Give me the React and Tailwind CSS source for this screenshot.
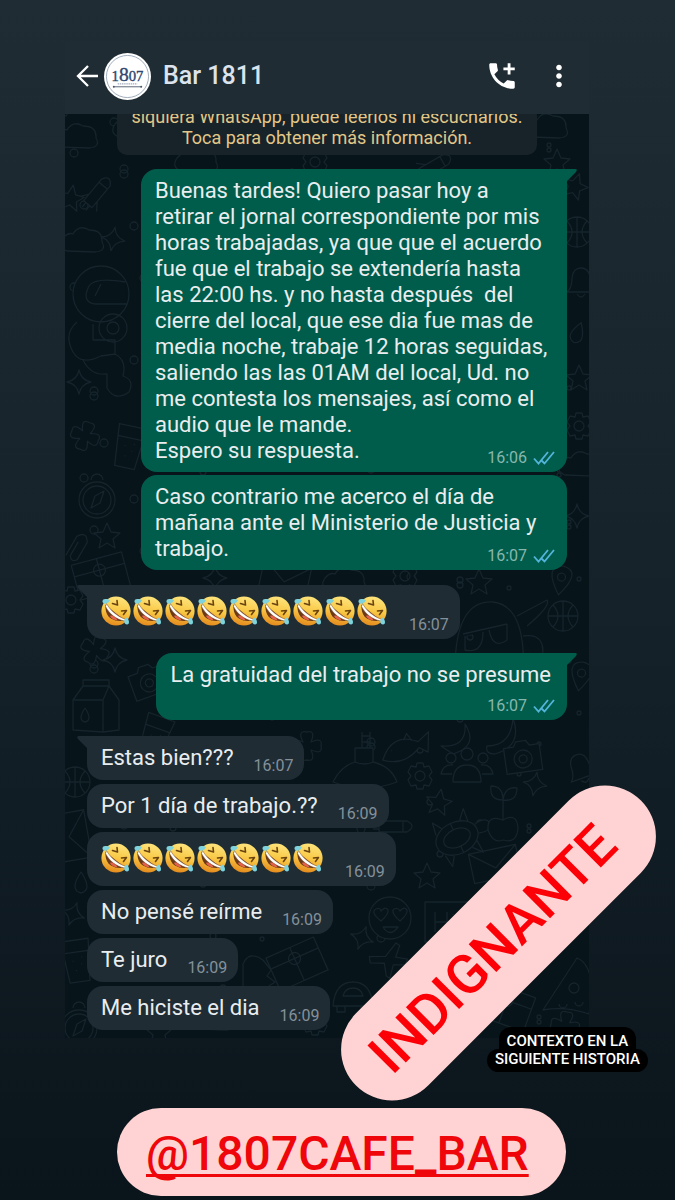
import React from 'react';
import { MdAddIcCall, MdMoreVert } from 'react-icons/md';

const longText = `Buenas tardes! Quiero pasar hoy a
retirar el jornal correspondiente por mis
horas trabajadas, ya que que el acuerdo
fue que el trabajo se extendería hasta
las 22:00 hs. y no hasta después  del
cierre del local, que ese dia fue mas de
media noche, trabaje 12 horas seguidas,
saliendo las las 01AM del local, Ud. no
me contesta los mensajes, así como el
audio que le mande.
Espero su respuesta.`;

const warningText = `Caso contrario me acerco el día de
mañana ante el Ministerio de Justicia y
trabajo.`;

// [type, x, y, rotation]
const doodles = [
  ['rocket', 34, 76, 40], ['star', 6, 84, 10], ['cloud', 18, 128, 0], ['spark', 48, 125, 10],
  ['helmet', 36, 180, 0], ['spark', 14, 268, 0], ['flower', 20, 322, 20], ['cup', 64, 332, 12],
  ['compass', 32, 384, 0], ['star', 42, 422, 0], ['clip', 12, 434, 30], ['box', 36, 462, -15],
  ['gear', 6, 486, 0], ['flower', 30, 536, 30], ['spark', 50, 546, 0], ['carton', 30, 594, 0],
  ['star', 72, 486, 10], ['camera', 84, 568, -20], ['ball', 10, 668, 0], ['card', 8, 722, 80],
  ['drop', 16, 770, 0], ['spark', 8, 800, 20], ['cup', 12, 846, -8], ['compass', 14, 912, 0],
  ['cloud', 12, 24, 0], ['cloud', 70, 14, 0], ['star', 510, 72, 20], ['cloud', 482, 14, 0],
  ['star', 492, 48, 0], ['cloud', 132, 48, 0], ['gear', 250, 48, 0], ['rocket', 372, 50, 60],
  ['ball', 512, 118, 0], ['bell', 516, 168, 0], ['drop', 512, 220, 20], ['star', 514, 264, 0],
  ['gear', 514, 312, 0], ['cloud', 516, 352, 0], ['spark', 512, 402, 0], ['star', 414, 468, 0],
  ['pin', 496, 466, 10], ['ghost', 428, 522, 0], ['ball', 498, 502, 0], ['gear', 340, 462, 0],
  ['cloud', 280, 468, 0], ['card', 220, 464, 12], ['spark', 150, 464, 0], ['pin', 516, 562, 10],
  ['fish', 340, 634, -10], ['cup', 90, 622, 20], ['flower', 242, 632, 0], ['banana', 436, 618, 0],
  ['gear', 355, 662, 0], ['people', 402, 656, 0], ['camera', 458, 644, -8], ['spark', 470, 670, 10],
  ['star', 374, 688, 10], ['turtle', 392, 724, -25], ['cherry', 438, 706, 0], ['bell', 516, 654, -20],
  ['hat', 300, 660, 0], ['rocket', 332, 712, 90], ['star', 362, 762, 0], ['card', 430, 750, -12],
  ['love', 325, 804, 0], ['sign', 390, 808, 0], ['box', 232, 850, -24],
  ['spark', 297, 824, 20], ['plane', 324, 846, 10], ['dino', 192, 862, 0], ['car', 288, 884, 0],
  ['cloud', 150, 906, 0], ['gear', 250, 908, 0], ['pizza', 508, 870, 0],
  ['flower', 500, 912, 10], ['box', 440, 892, 20], ['star', 94, 918, 0],
];

const shapes = {
  star: 'M0 -13L4 -4L13 -3L6 3L8 12L0 7L-8 12L-6 3L-13 -3L-4 -4Z',
  spark: 'M0 -12Q2 -2 12 0Q2 2 0 12Q-2 2 -12 0Q-2 -2 0 -12Z',
  cloud: 'M-16 9Q-26 5 -20 -4Q-15 -10 -10 -8Q-4 -18 6 -12Q20 -12 19 0Q24 9 12 10Z',
  rocket: 'M-5 18V-10Q0 -20 6 -10V18ZM-5 10L-11 18M6 10L12 18M-5 -6H6M-2 18V24M3 18V24',
  helmet: 'M-28 0a28 28 0 1 0 56 0a28 28 0 1 0 -56 0M26 10H-6Q-20 8 -12 -8Q-6 -17 24 -12M-6 2L0 -10M-24 28Q-38 40 -28 58Q-20 72 0 62L14 60V46H-8V30M-2 34a14 14 0 1 0 28 0a14 14 0 1 0 -28 0M6 34a6 6 0 1 0 12 0a6 6 0 1 0 -12 0M-18 66Q-10 82 6 80V94Q14 108 28 98Q34 86 22 82Q26 66 14 60',
  flower: 'M-4 -4Q-10 -16 0 -14Q9 -16 4 -4Q16 -9 14 0Q16 9 4 4Q9 16 0 14Q-9 16 -4 4Q-16 9 -14 0Q-16 -9 -4 -4Z',
  cup: 'M-14 -20H14L10 22H-10ZM-13 -8H13M-4 0v1M4 4v1M-2 10v1M5 -3v1',
  compass: 'M-18 2a18 18 0 1 0 36 0a18 18 0 1 0 -36 0M-14 2a14 14 0 1 0 28 0a14 14 0 1 0 -28 0M-6 10L-2 -2L7 -7L3 5ZM-6 -18a6 6 0 1 1 12 0',
  clip: 'M-6 12V-10Q0 -20 6 -10V10Q2 16 -2 10V-6',
  box: 'M-26 -18H26V18H-26ZM-26 -6H26M0 -18V18M-6 -6a6 6 0 1 0 12 0a6 6 0 1 0 -12 0',
  gear: 'M-5 0a5 5 0 1 0 10 0a5 5 0 1 0 -10 0M-3 -13H3L4 -9L9 -10L12 -4L9 0L12 4L9 10L4 9L3 13H-3L-4 9L-9 10L-12 4L-9 0L-12 -4L-9 -10L-4 -9Z',
  carton: 'M-22 -8L-12 -22H14L24 -8V22L8 24L-22 22ZM-22 -8H8V24M8 -8L14 -22M-10 0Q-18 12 -10 14Q-2 12 -10 0M-12 -22V-28H14V-22',
  camera: 'M-18 -12H-8L-5 -17H5L8 -12H18V14H-18ZM-9 1a9 9 0 1 0 18 0a9 9 0 1 0 -18 0M-4 1a4 4 0 1 0 8 0a4 4 0 1 0 -8 0',
  ball: 'M-15 0a15 15 0 1 0 30 0a15 15 0 1 0 -30 0M-15 0H15M0 -15V15M-10 -11Q0 0 -10 11M10 -11Q0 0 10 11',
  card: 'M-24 -15H24V15H-24ZM-24 -15L0 4L24 -15',
  drop: 'M0 -12Q-12 6 0 9Q12 6 0 -12Z',
  bell: 'M-14 10Q-9 6 -9 -4Q-8 -14 0 -14Q8 -14 9 -4Q9 6 14 10ZM-4 12Q0 18 4 12',
  pin: 'M0 15Q-20 -12 0 -14Q20 -12 0 15ZM-4 -3a4 4 0 1 0 8 0a4 4 0 1 0 -8 0',
  ghost: 'M-38 34Q-38 -36 0 -34Q34 -30 30 40M-30 -2L14 -12M-28 0V14Q-10 18 -10 -4M-4 -6Q0 14 14 4V-12M24 -20L54 -36Q58 -30 34 -10M30 0Q56 -4 48 28',
  fish: 'M-24 8Q-10 -18 14 -4L26 -12L22 8L14 2Q-4 18 -24 8ZM-14 0v1M0 -8L4 -14L8 -6',
  banana: 'M-14 14Q10 14 12 -14Q22 14 -6 22Q-16 22 -14 14ZM-60 14Q-34 16 -36 -8Q-22 14 -48 22Z',
  people: 'M-6 -16a6 6 0 1 0 12 0a6 6 0 1 0 -12 0M-21 -12a5 5 0 1 0 10 0a5 5 0 1 0 -10 0M11 -12a5 5 0 1 0 10 0a5 5 0 1 0 -10 0M-14 12Q-14 -5 0 -5Q14 -5 14 12ZM-15 4H-26Q-24 -6 -14 -5M15 4H26Q24 -6 14 -5',
  turtle: 'M-22 0a22 16 0 1 0 44 0a22 16 0 1 0 -44 0M-14 0a14 9 0 1 0 28 0a14 9 0 1 0 -28 0M22 -5Q36 -8 36 2Q34 8 22 5M-10 -15L-16 -24L-18 -11M10 -15L18 -24L17 -10M-10 15L-16 24L-18 11M10 15L18 24L17 10M0 -16V-9M0 9V16',
  cherry: 'M0 0Q-16 -6 -15 10Q-10 24 0 20Q14 24 15 8Q14 -8 0 0V-20M0 -20Q-14 -20 -12 -34Q0 -34 0 -20Q2 -34 14 -32Q14 -18 0 -20',
  hat: 'M-32 8Q-24 -8 -10 -12V-26H8V-12Q26 -8 32 8Q0 20 -32 8ZM-10 -12Q0 -8 8 -12M-3 -26V-42M5 -26V-42M-3 -32H5M-3 -38H5',
  love: 'M-21 0a21 21 0 1 0 42 0a21 21 0 1 0 -42 0M-9 3Q-20 -6 -14 -9Q-10 -11 -9 -7Q-5 -12 -2 -8Q-1 -4 -9 3ZM10 3Q0 -6 4 -9Q8 -11 10 -7Q14 -12 17 -8Q18 -4 10 3ZM-7 9H8Q0 20 -7 9Z',
  sign: 'M-30 -20H40V20H-30ZM-20 -10V10M-8 -10V10M-20 0H-8M-2 -2V10M-2 -8v1M8 -10V4M8 9v1',
  plane: 'M-20 0L-4 -3L4 -18L8 -16L6 -4L18 -4L17 2L5 4L4 18L0 16L-4 4L-18 6Z',
  dino: 'M-14 24V-12Q-8 -26 6 -16L14 -6L10 0L18 6L12 10L20 16L14 20L20 28',
  car: 'M-20 8Q-18 -16 0 -16Q18 -16 20 8ZM-10 -2Q-8 -10 0 -10Q8 -10 10 -2ZM-16 8V14H-8V8M8 8V14H16V8',
  pizza: 'M-30 26L4 -26Q24 -18 16 30Q-8 22 -30 26ZM-4 4a5 5 0 1 0 10 0a5 5 0 1 0 -10 0M-14 20a4 4 0 1 0 8 0M2 18a4 4 0 1 0 8 0',
};

const dots = Array.from({ length: 210 }, (_, i) => [
  (i * 137 + (i % 7) * 31) % 524,
  (i * 89 + (i % 11) * 47) % 924,
  (i % 3) + 2,
]);

function Wallpaper() {
  return (
    <svg className="absolute inset-0 h-full w-full" viewBox="0 0 524 924" preserveAspectRatio="xMinYMin slice" fill="none" stroke="#16242b" strokeWidth="1.3" strokeLinejoin="round" aria-hidden="true">
      {dots.map(([x, y, r], i) => <circle key={i} cx={x} cy={y} r={r} />)}
      {doodles.map(([type, x, y, rot], i) => (
        <path key={i} d={shapes[type]} transform={`translate(${x} ${y}) rotate(${rot})`} fill="#07141a" />
      ))}
    </svg>
  );
}

function Rofl() {
  return (
    <svg className="size-[30px]" viewBox="0 0 30 30" aria-hidden="true">
      <defs>
        <linearGradient id="face" x1="0.6" y1="0" x2="0.4" y2="1">
          <stop offset="0" stopColor="#fde47c" />
          <stop offset="0.5" stopColor="#f9c845" />
          <stop offset="1" stopColor="#e48a1c" />
        </linearGradient>
      </defs>
      <circle cx="15" cy="15" r="14.6" fill="url(#face)" />
      <path d="M4.500 9C4 15 6 20 10 22.500C14 25 19 25.500 24 24.500Z" fill="#6a3a1a" />
      <path d="M9 20C11 18.500 15 20.500 16.500 24.300C13 24.300 10 22.500 9 20Z" fill="#e5604a" />
      <path d="M5.500 7.500C9 14 16 20.500 25 23.500L23.500 25C15 23.500 8 17.500 4.500 10.500Z" fill="#fff" stroke="#7a4a1c" strokeWidth="0.5" />
      <path d="M11.500 7.500L16.500 9L16 4.500M20.500 15L25.500 14.500L22.500 18.500" fill="none" stroke="#6b4310" strokeWidth="1.600" strokeLinecap="round" strokeLinejoin="round" />
      <path d="M9 4.500C8 2.500 3 2.500 1.800 4C.8 6 2 8 4.500 7.800C7 7.500 8 6 9 4.500Z" fill="#7fd3dd" />
      <path d="M24.800 21.500C27 22 28.500 25 27.800 27.500C26.500 29.300 23.500 28.500 23.300 26C23.200 24 24 22.500 24.800 21.500Z" fill="#7fd3dd" />
    </svg>
  );
}

function Laughs({ count }) {
  return (
    <div className="flex gap-0.5 pt-0.5 pr-0.5 pb-[9px]" role="img" aria-label={'🤣'.repeat(count)}>
      {Array.from({ length: count }, (_, i) => <Rofl key={i} />)}
    </div>
  );
}

function Ticks() {
  return (
    <svg className="h-4 w-[22px]" viewBox="0 0 22 16" fill="none" stroke="#53b4dc" strokeWidth="1.800" aria-hidden="true">
      <path d="M1 8.500L5.500 13.500L15 2M8.500 10.500L11.500 13.500L21 2" />
    </svg>
  );
}

function Incoming({ children, time, tail }) {
  return (
    <div className="relative flex items-end gap-5 self-start rounded-[16px] bg-[#1f2c34] pt-[9px] pr-[11px] pb-1 pl-[14px] text-[#e9edef]">
      {tail && (
        <svg className="absolute top-0 left-[-10px] h-4 w-[26px]" viewBox="0 0 26 16" fill="#1f2c34" aria-hidden="true">
          <path d="M2 0H26V16H10V12L1 3Q-1 0 2 0Z" />
        </svg>
      )}
      <div className="relative">{children}</div>
      <time className="text-[16px] leading-5 text-[#84919a]">{time}</time>
    </div>
  );
}

function Stamp({ time }) {
  return (
    <div className="flex items-center gap-1.5 self-end">
      <time className="text-[16px] leading-5 text-[#86b7ad]">{time}</time>
      <Ticks />
    </div>
  );
}

// the stamp shares the last line, or takes a row of its own when the line is full
function Outgoing({ text, time, tail, wide, below }) {
  const lines = text.split('\n');
  const last = lines.pop();
  return (
    <div className={`relative flex flex-col self-end rounded-[16px] bg-[#005d4b] pt-[9px] pr-3 pb-1 pl-[14px] text-[#e9edef] ${wide ? 'w-[426px]' : ''}`}>
      {tail && (
        <svg className="absolute top-0 right-[-10px] h-4 w-[26px]" viewBox="0 0 26 16" fill="#005d4b" aria-hidden="true">
          <path d="M24 0H0V16H16V12L25 3Q27 0 24 0Z" />
        </svg>
      )}
      {lines.map((line) => <p key={line} className="relative whitespace-pre">{line}</p>)}
      <div className={`relative flex ${below ? 'flex-col gap-2' : 'items-end justify-between'}`}>
        <p className={below ? 'pr-1' : 'pb-1'}>{last}</p>
        <Stamp time={time} />
      </div>
    </div>
  );
}

function Header() {
  return (
    <header className="flex h-[72px] items-center bg-[#1f2c34] pr-[13px] pb-1 pl-[11px]">
      <button aria-label="Volver">
        <svg className="h-6 w-6" viewBox="0 0 24 24" fill="none" stroke="#fff" strokeWidth="2.300">
          <path d="M22 12H2M12 2L2 12L12 22" />
        </svg>
      </button>
      <svg className="ml-1 size-[47px]" viewBox="0 0 48 48" role="img" aria-label="1807">
        <circle cx="24" cy="24" r="24" fill="#fff" />
        <circle cx="24" cy="24" r="21.500" fill="none" stroke="#8797aa" strokeWidth="0.8" />
        <text x="24" y="29" textAnchor="middle" fontFamily="Liberation Serif, serif" fontSize="15" fill="#2f466e" stroke="#2f466e" strokeWidth="0.4">
          1<tspan fontSize="20">8</tspan>07
        </text>
        <path d="M14 31.500H34" stroke="#a3acbb" strokeWidth="1.200" strokeDasharray="1.5 0.7" />
        <path d="M10 34.500H38" stroke="#4b5568" strokeWidth="0.9" />
        <circle cx="10" cy="34.500" r="1" fill="#4b5568" />
        <circle cx="38" cy="34.500" r="1" fill="#4b5568" />
      </svg>
      <h1 className="ml-3 flex-1 text-[25px] font-medium text-[#dbe3ec]">Bar 1811</h1>
      <button aria-label="Llamar"><MdAddIcCall className="size-[34px] text-white" /></button>
      <button className="ml-[23px]" aria-label="Más opciones"><MdMoreVert className="size-[34px] text-white" /></button>
    </header>
  );
}

function App() {
  return (
    <div className="relative min-h-screen overflow-hidden bg-linear-to-b from-[#202c34] via-[#15222a] to-[#0a141b] pt-[42px] pb-1 font-[Roboto,sans-serif]">
      <main className="mr-[86px] ml-[65px]">
        <Header />
        <section className="relative overflow-hidden bg-[#07141a]">
          <Wallpaper />
          <div className="relative flex flex-col pr-[22px] pb-2 pl-[22px] text-[22px] leading-[26px]">
            <p className="-mt-2 w-[420px] self-center rounded-[10px] bg-[#182329] pb-[7px] text-center text-[18px] leading-[21px] text-[#e2c888]">
              siquiera WhatsApp, puede leerlos ni escucharlos.<br />Toca para obtener más información.
            </p>
            <div className="mt-3.5 flex flex-col gap-[3px]">
              <Outgoing text={longText} time="16:06" tail wide />
              <Outgoing text={warningText} time="16:07" wide />
            </div>
            <div className="mt-[15px] flex flex-col">
              <Incoming time="16:07" tail><Laughs count={9} /></Incoming>
            </div>
            <div className="mt-3.5 flex flex-col">
              <Outgoing text="La gratuidad del trabajo no se presume" time="16:07" tail below />
            </div>
            <div className="mt-4 flex flex-col gap-1">
              <Incoming time="16:07" tail><p className="pb-[5px]">Estas bien???</p></Incoming>
              <Incoming time="16:09"><p className="pb-[5px]">Por 1 día de trabajo.??</p></Incoming>
              <Incoming time="16:09"><Laughs count={7} /></Incoming>
              <Incoming time="16:09"><p className="pb-[5px]">No pensé reírme</p></Incoming>
              <Incoming time="16:09"><p className="pb-[5px]">Te juro</p></Incoming>
              <Incoming time="16:09"><p className="pb-[5px]">Me hiciste el dia</p></Incoming>
            </div>
          </div>
        </section>
      </main>

      {/* stickers on top of the chat */}
      <div className="absolute top-[892px] left-[297px] flex h-[102px] w-[403px] -rotate-45 items-center rounded-full bg-[#ffd3d3] pl-8">
        <strong className="text-[55px] leading-none font-medium text-[#fb0007]">INDIGNANTE</strong>
      </div>
      <div className="absolute top-[1027px] left-[487px] flex flex-col items-center text-[15px] leading-4 font-medium text-white">
        <span className="rounded-t-[12px] bg-black px-2 pt-1.5">CONTEXTO EN LA</span>
        <span className="rounded-[12px] bg-black px-2 pt-0.5 pb-[5px]">SIGUIENTE HISTORIA</span>
      </div>

      <a href="#1807cafe_bar" className="mt-[70px] ml-[117px] flex h-[88px] w-fit items-center rounded-full bg-[#ffd3d3] pt-1 pr-[37px] pl-[29px] text-[48px] leading-none font-medium text-[#ee060b] underline decoration-3 underline-offset-4 [text-decoration-skip-ink:none]">
        @1807CAFE_BAR
      </a>
    </div>
  );
}

export default App;
